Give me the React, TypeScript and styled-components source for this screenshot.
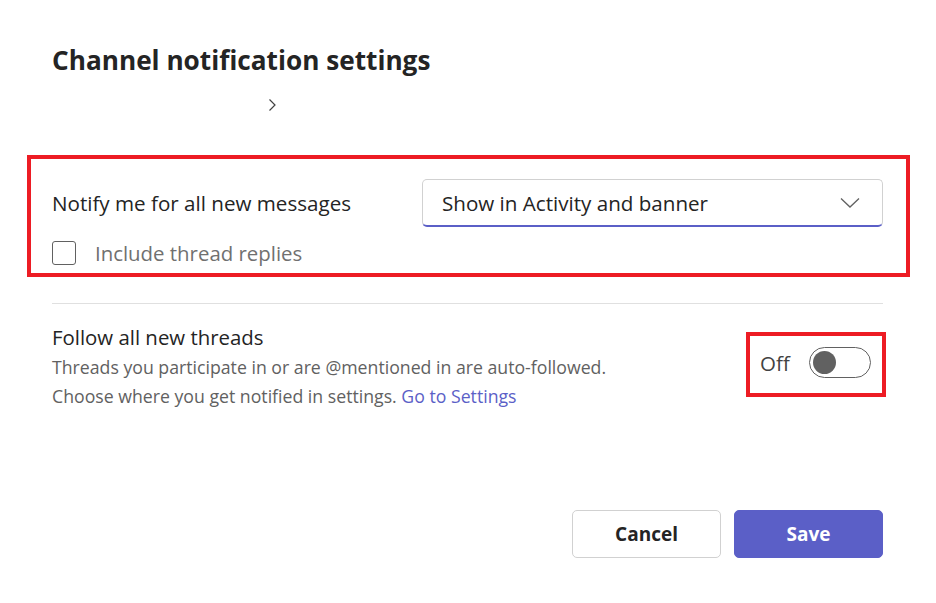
import React from "react";
import styled, { createGlobalStyle } from "styled-components";

const Global = createGlobalStyle`
  html, body { margin: 0; padding: 0; background: #ffffff; }
  body { font-family: "Open Sans", "Noto Sans", sans-serif; color: #242424; }
  * { box-sizing: border-box; }
`;

const Dialog = styled.div`
  width: 936px;
  height: 603px;
  padding: 43px 53px 0 52px;
  display: flex;
  flex-direction: column;
  background: #ffffff;
`;

const Title = styled.h1`
  margin: 0;
  font-size: 26.2px;
  line-height: 34px;
  font-weight: 700;
  color: #242424;
`;

const Breadcrumb = styled.div`
  margin-top: 21px;
  height: 14px;
  padding-left: 216px;
  display: flex;
  align-items: center;
  color: #424242;
`;

const Highlight = styled.section`
  margin: 43px -27px 0 -25px;
  border: 4px solid #ed1c24;
  padding: 20px 23px 8px 21px;
  display: flex;
  flex-direction: column;
  gap: 14px;
`;

const NotifyRow = styled.div`
  display: flex;
  align-items: center;
`;

const Label = styled.div`
  width: 370px;
  font-size: 20.6px;
  line-height: 26px;
  color: #242424;
`;

const Dropdown = styled.button`
  flex: 1;
  height: 48px;
  display: flex;
  align-items: center;
  justify-content: space-between;
  padding: 0 22px 0 19px;
  background: #fff;
  border: 1px solid #d1d1d1;
  border-bottom: 2px solid #5b5fc7;
  border-radius: 5px;
  font-family: inherit;
  font-size: 20.6px;
  color: #242424;
  cursor: pointer;
`;

const CheckRow = styled.label`
  display: flex;
  align-items: center;
  gap: 19px;
  font-size: 20.4px;
  line-height: 24px;
  color: #707070;
`;

const Checkbox = styled.span`
  width: 24px;
  height: 24px;
  border: 1px solid #616161;
  border-radius: 3px;
  background: #fff;
`;

const Divider = styled.hr`
  margin: 26px 0 0 0;
  border: none;
  border-top: 1px solid #e0e0e0;
  height: 0;
`;

const FollowRow = styled.div`
  margin-top: 20px;
  display: flex;
  justify-content: space-between;
  align-items: flex-start;
`;

const FollowText = styled.div`
  display: flex;
  flex-direction: column;
`;

const FollowTitle = styled.div`
  font-size: 20.4px;
  line-height: 26px;
  margin-bottom: 3px;
  color: #242424;
`;

const SubLine = styled.div`
  font-size: 17.7px;
  line-height: 29px;
  color: #616161;
`;

const Link = styled.a`
  color: #5b5fc7;
  text-decoration: none;
`;

const ToggleBox = styled.div`
  margin: 8px -3px 0 0;
  width: 140px;
  height: 65px;
  border: 4px solid #ed1c24;
  display: flex;
  align-items: center;
  padding: 0 0 4px 10px;
  gap: 19px;
`;

const OffLabel = styled.span`
  font-size: 20.5px;
  color: #424242;
`;

const Toggle = styled.span`
  width: 62px;
  height: 31px;
  border: 1px solid #616161;
  border-radius: 16px;
  display: flex;
  align-items: center;
  padding-left: 3px;
`;

const Knob = styled.span`
  width: 23px;
  height: 23px;
  border-radius: 50%;
  background: #616161;
`;

const Footer = styled.div`
  margin-top: auto;
  margin-bottom: 45px;
  display: flex;
  justify-content: flex-end;
  gap: 13px;
`;

const Button = styled.button<{ $primary?: boolean }>`
  width: 149px;
  height: 48px;
  border-radius: 5px;
  font-family: inherit;
  font-size: 19px;
  font-weight: 700;
  cursor: pointer;
  border: 1px solid ${(p) => (p.$primary ? "#5b5fc7" : "#d1d1d1")};
  background: ${(p) => (p.$primary ? "#5b5fc7" : "#ffffff")};
  color: ${(p) => (p.$primary ? "#ffffff" : "#242424")};
`;

export default function App() {
  return (
    <>
      <Global />
      <Dialog>
        <Title>Channel notification settings</Title>
        <Breadcrumb>
          <svg width="9" height="14" viewBox="0 0 9 14" fill="none">
            <path d="M1.5 1.5 L7 7 L1.5 12.5" stroke="#424242" strokeWidth="1.2" />
          </svg>
        </Breadcrumb>
        <Highlight>
          <NotifyRow>
            <Label>Notify me for all new messages</Label>
            <Dropdown>
              <span>Show in Activity and banner</span>
              <svg width="20" height="12" viewBox="0 0 20 12" fill="none">
                <path d="M1 1.5 L10 10 L19 1.5" stroke="#616161" strokeWidth="1.3" />
              </svg>
            </Dropdown>
          </NotifyRow>
          <CheckRow>
            <Checkbox />
            Include thread replies
          </CheckRow>
        </Highlight>
        <Divider />
        <FollowRow>
          <FollowText>
            <FollowTitle>Follow all new threads</FollowTitle>
            <SubLine>Threads you participate in or are @mentioned in are auto-followed.</SubLine>
            <SubLine>
              Choose where you get notified in settings. <Link href="#">Go to Settings</Link>
            </SubLine>
          </FollowText>
          <ToggleBox>
            <OffLabel>Off</OffLabel>
            <Toggle>
              <Knob />
            </Toggle>
          </ToggleBox>
        </FollowRow>
        <Footer>
          <Button>Cancel</Button>
          <Button $primary>Save</Button>
        </Footer>
      </Dialog>
    </>
  );
}
